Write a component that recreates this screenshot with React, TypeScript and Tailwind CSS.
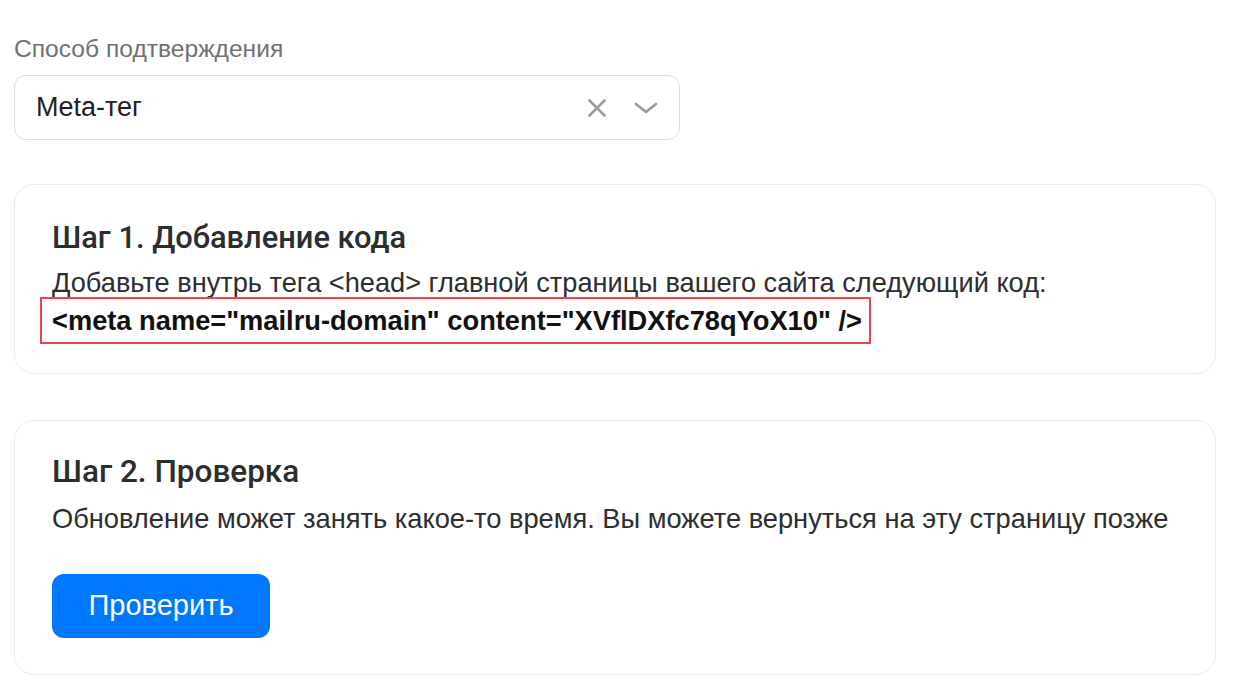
import React from "react";

const sans = { fontFamily: '"Liberation Sans", Arial, sans-serif' };
const head = { fontFamily: 'Roboto, "Liberation Sans", Arial, sans-serif' };

export default function App() {
  return (
    <div className="min-h-screen bg-white px-[14px] pt-[35px] text-[#2c2d2e]" style={sans}>
      {/* Method select */}
      <div className="text-[24.6px] leading-[28px] text-[#6f7174]">Способ подтверждения</div>
      <div className="mt-[12px] flex h-[65px] w-[666px] items-center rounded-[12px] border border-[#dcdde1] pl-[21px] pr-[21px]">
        <span className="flex-1 text-[27px] text-[#1f2023]">Meta-тег</span>
        <svg width="18" height="18" viewBox="0 0 18 18" className="text-[#9a9ca1]">
          <path d="M1.5 1.5 16.5 16.5M16.5 1.5 1.5 16.5" stroke="currentColor" strokeWidth="2.6" strokeLinecap="round" />
        </svg>
        <svg width="24" height="14" viewBox="0 0 24 14" className="ml-[28px] text-[#9a9ca1]">
          <path d="M2 3 12 11 22 3" fill="none" stroke="currentColor" strokeWidth="2.8" strokeLinecap="round" strokeLinejoin="round" />
        </svg>
      </div>

      {/* Step 1 */}
      <div className="mt-[44px] w-[1202px] rounded-[20px] border border-[#eaeaef] px-[37px] pb-[29px] pt-[35px]">
        <h2 className="text-[30.8px] font-medium leading-[36px] text-[#2c2d2e]" style={head}>
          Шаг 1. Добавление кода
        </h2>
        <p className="mt-[12px] text-[27.2px] leading-[30px] text-[#2c2d2e]">
          Добавьте внутрь тега &lt;head&gt; главной страницы вашего сайта следующий код:
        </p>
        <div className="-ml-[12px] -mt-[1px] inline-block border-2 border-[#f0444b] py-[6px] pl-[10px] pr-[7px] text-[27.25px] font-bold leading-[31px] text-[#111]">
          &lt;meta name="mailru-domain" content="XVflDXfc78qYoX10" /&gt;
        </div>
      </div>

      {/* Step 2 */}
      <div className="mt-[46px] w-[1202px] rounded-[20px] border border-[#eaeaef] px-[37px] pb-[36px] pt-[33px]">
        <h2 className="text-[31.5px] font-medium leading-[36px] text-[#2c2d2e]" style={head}>
          Шаг 2. Проверка
        </h2>
        <p className="mt-[13px] text-[27.25px] leading-[32px] text-[#2c2d2e]">
          Обновление может занять какое-то время. Вы можете вернуться на эту страницу позже
        </p>
        <button className="mt-[39px] h-[64px] w-[218px] rounded-[12px] bg-[#0077ff] text-[29px] text-white">
          Проверить
        </button>
      </div>
    </div>
  );
}
